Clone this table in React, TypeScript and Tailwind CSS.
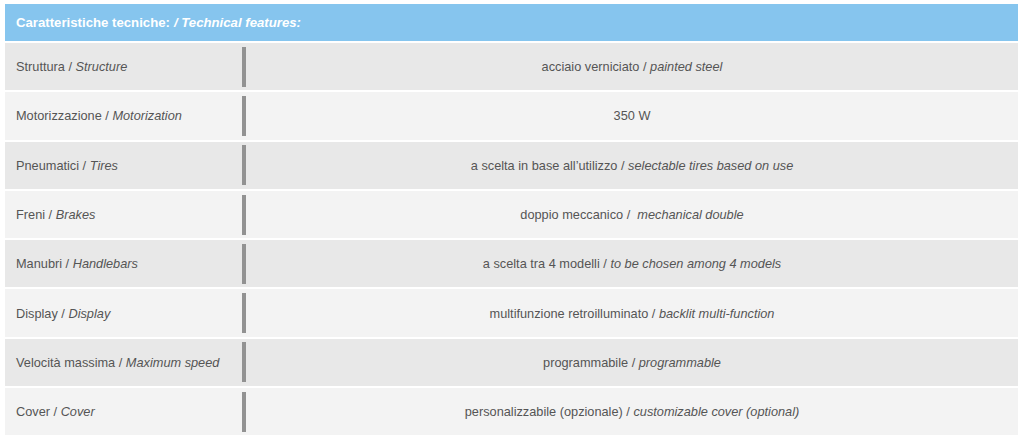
import React from "react";

const rows: [string, string, string, string][] = [
  ["Struttura", "Structure", "acciaio verniciato", "painted steel"],
  ["Motorizzazione", "Motorization", "350 W", ""],
  ["Pneumatici", "Tires", "a scelta in base all’utilizzo", "selectable tires based on use"],
  ["Freni", "Brakes", "doppio meccanico", "\u00a0mechanical double"],
  ["Manubri", "Handlebars", "a scelta tra 4 modelli", "to be chosen among 4 models"],
  ["Display", "Display", "multifunzione retroilluminato", "backlit multi-function"],
  ["Velocità massima", "Maximum speed", "programmabile", "programmable"],
  ["Cover", "Cover", "personalizzabile (opzionale)", "customizable cover (optional)"],
];

const App = () => {
  return (
    <div className="min-h-[439px] w-[1021px] bg-white pt-[4px] pl-[5px] pr-[3px] font-['Liberation_Sans',Arial,sans-serif] text-[12.75px] text-[#555]">
      <div className="flex flex-col gap-[2px]">
        {/* Header */}
        <div className="flex h-[37px] items-center bg-[#86c5ee] px-[11px] text-[13.2px] font-bold text-white">
          Caratteristiche tecniche: <i className="ml-[4px]">/ Technical features:</i>
        </div>

        {rows.map(([it, en, valIt, valEn], i) => (
          <div
            key={it}
            className={`flex h-[47.3px] items-center ${i % 2 === 0 ? "bg-[#e8e8e8]" : "bg-[#f3f3f3]"}`}
          >
            <div className="w-[237px] pl-[11px]">
              {it} / <i>{en}</i>
            </div>
            <div className="h-[40px] w-[4px] bg-[#929292]" />
            <div className="flex-1 text-center">
              {valEn ? (
                <>
                  {valIt} / <i>{valEn}</i>
                </>
              ) : (
                valIt
              )}
            </div>
          </div>
        ))}
      </div>
    </div>
  );
};

export default App;
